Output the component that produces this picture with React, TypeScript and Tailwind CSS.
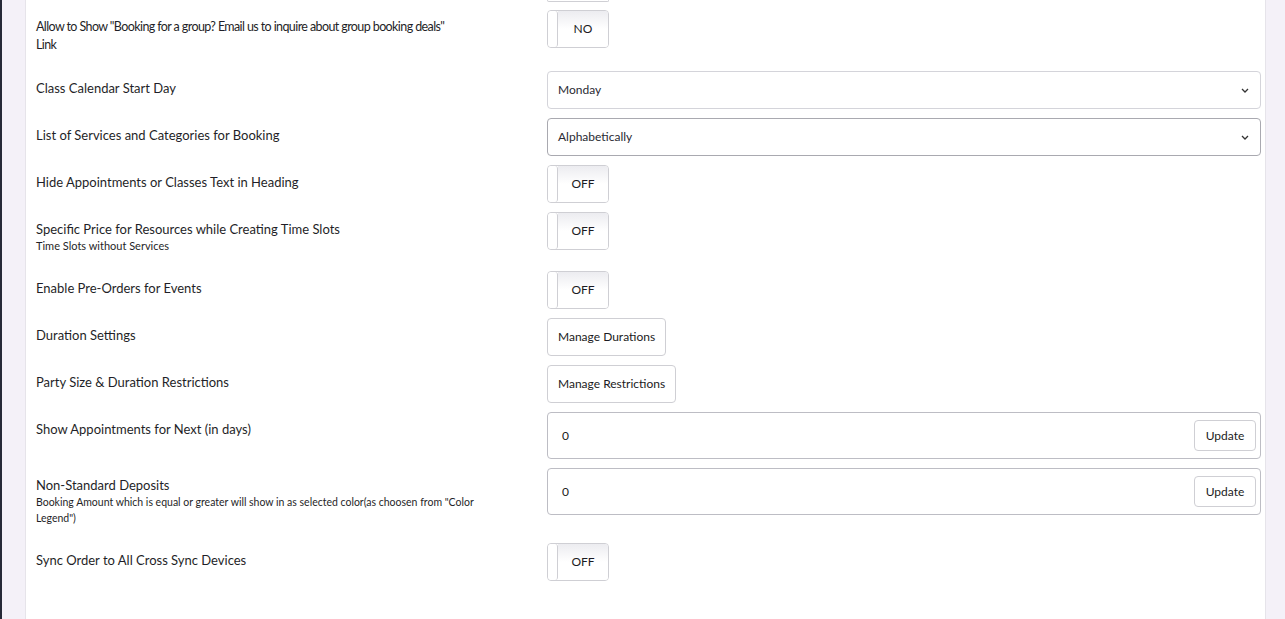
import React from "react";

const font = { fontFamily: 'Lato, "Open Sans", sans-serif' };

function Toggle({ text }: { text: string }) {
  return (
    <div className="flex h-[38px] w-[62px] rounded-[4px] border border-[#cfcfd4] bg-white overflow-hidden">
      <div className="w-[10px] border-r border-[#cfcfd4] rounded-[3px] bg-white" />
      <div className="flex-1 flex items-center justify-center text-[12px] text-[#1b1b22] bg-gradient-to-b from-[#ececf0] via-white to-white">
        {text}
      </div>
    </div>
  );
}

function Select({ value, dark }: { value: string; dark?: boolean }) {
  return (
    <div
      className={`flex h-[38px] items-center justify-between rounded-[4px] border bg-white pl-[10px] pr-[11px] text-[12px] text-[#2a2a33] ${
        dark ? "border-[#a9a9b0]" : "border-[#d4d4da]"
      }`}
    >
      <span>{value}</span>
      <svg width="8" height="5" viewBox="0 0 8 5" fill="none">
        <path d="M1 1l3 3 3-3" stroke="#333" strokeWidth="1.3" />
      </svg>
    </div>
  );
}

function Btn({ text }: { text: string }) {
  return (
    <div className="inline-flex h-[38px] items-center rounded-[4px] border border-[#cfcfd4] bg-white px-[10px] text-[12px] text-[#1b1b22]">
      {text}
    </div>
  );
}

function NumInput() {
  return (
    <div className="flex h-[47px] items-center justify-between rounded-[4px] border border-[#bdbdc4] bg-white pl-[14px] pr-[4px] text-[12px] text-[#1b1b22]">
      <span>0</span>
      <div className="flex h-[31px] w-[62px] items-center justify-center rounded-[4px] border border-[#cfcfd4]">
        Update
      </div>
    </div>
  );
}

function Row({
  label,
  sub,
  labelClass = "text-[13px]",
  subClass = "text-[11px]",
  children,
}: {
  label: React.ReactNode;
  sub?: React.ReactNode;
  labelClass?: string;
  subClass?: string;
  children: React.ReactNode;
}) {
  return (
    <div className="flex mb-[9px]">
      <div className="w-[511px] shrink-0 pt-[8px] pb-[8px] pr-4">
        <div className={`${labelClass} leading-[18px] text-[#1f1f28]`}>{label}</div>
        {sub && <div className={`${subClass} leading-[16px] text-[#1f1f28]`}>{sub}</div>}
      </div>
      <div className="flex-1">{children}</div>
    </div>
  );
}

export default function App() {
  return (
    <div className="flex h-[619px] overflow-hidden bg-[#f4f1f8]" style={font}>
      <div className="w-[2px] shrink-0 bg-[#262a38]" />
      <div className="w-[23px] shrink-0" />
      <div className="w-[1241px] shrink-0 border-x border-[#e6e4ea] bg-white pl-[10px] pr-[4px]">
        <div className="flex mb-[8px]">
          <div className="w-[511px] shrink-0" />
          <div className="h-[2px] w-[62px] rounded-b-[4px] border-x border-b border-[#cfcfd4]" />
        </div>

        <Row
          labelClass="text-[12.5px] tracking-[-0.6px]"
          label={
            <>
              Allow to Show "Booking for a group? Email us to inquire about group booking deals"
              <br />
              Link
            </>
          }
        >
          <Toggle text="NO" />
        </Row>

        <Row label="Class Calendar Start Day">
          <Select value="Monday" />
        </Row>

        <Row label="List of Services and Categories for Booking">
          <Select value="Alphabetically" dark />
        </Row>

        <Row label="Hide Appointments or Classes Text in Heading">
          <Toggle text="OFF" />
        </Row>

        <Row
          label="Specific Price for Resources while Creating Time Slots"
          sub="Time Slots without Services"
        >
          <Toggle text="OFF" />
        </Row>

        <Row label="Enable Pre-Orders for Events">
          <Toggle text="OFF" />
        </Row>

        <Row label="Duration Settings">
          <Btn text="Manage Durations" />
        </Row>

        <Row label="Party Size & Duration Restrictions">
          <Btn text="Manage Restrictions" />
        </Row>

        <Row label="Show Appointments for Next (in days)">
          <NumInput />
        </Row>

        <Row
          label="Non-Standard Deposits"
          subClass="text-[10.5px]"
          sub={
            <>
              Booking Amount which is equal or greater will show in as selected color(as choosen from "Color
              <br />
              Legend")
            </>
          }
        >
          <NumInput />
        </Row>

        <Row label="Sync Order to All Cross Sync Devices">
          <Toggle text="OFF" />
        </Row>
      </div>
    </div>
  );
}
